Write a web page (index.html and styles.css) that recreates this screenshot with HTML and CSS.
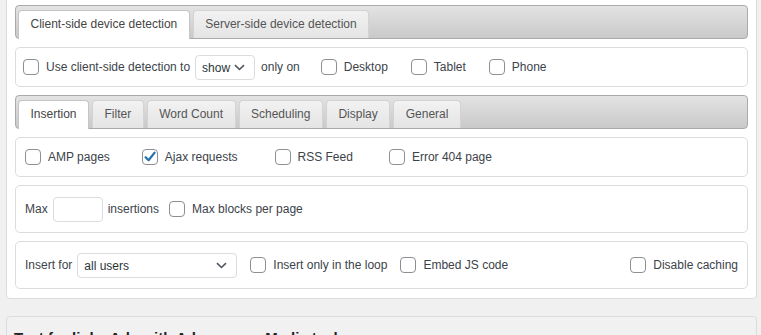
FILE: index.html
```html
<!DOCTYPE html>
<html>
<head>
<meta charset="utf-8">
<link rel="stylesheet" href="styles.css">
</head>
<body>
<div class="panel">
  <div class="tabbar">
    <div class="tab active">Client-side device detection</div>
    <div class="tab">Server-side device detection</div>
  </div>

  <div class="box box-device">
    <label class="opt"><span class="cb"></span>Use client-side detection to</label>
    <div class="select select-short"><span>show</span><svg class="chev" width="11" height="7" viewBox="0 0 11 7"><path d="M1 1.2 L5.5 5.5 L10 1.2" fill="none" stroke="#50575e" stroke-width="1.6"/></svg></div>
    <span class="txt">only on</span>
    <label class="opt device desktop"><span class="cb"></span>Desktop</label>
    <label class="opt device"><span class="cb"></span>Tablet</label>
    <label class="opt device"><span class="cb"></span>Phone</label>
  </div>

  <div class="tabbar">
    <div class="tab active">Insertion</div>
    <div class="tab">Filter</div>
    <div class="tab">Word Count</div>
    <div class="tab">Scheduling</div>
    <div class="tab">Display</div>
    <div class="tab">General</div>
  </div>

  <div class="box box-where">
    <label class="opt"><span class="cb"></span>AMP pages</label>
    <label class="opt ajax"><span class="cb checked"><svg width="16" height="16" viewBox="0 0 16 16"><path d="M3.6 8.2 L6.6 11.2 L12.6 3.6" fill="none" stroke="#2271b1" stroke-width="2.2" stroke-linecap="round" stroke-linejoin="round"/></svg></span>Ajax requests</label>
    <label class="opt rss"><span class="cb"></span>RSS Feed</label>
    <label class="opt err"><span class="cb"></span>Error 404 page</label>
  </div>

  <div class="box box-tall box-max">
    <span class="txt">Max</span>
    <span class="field"></span>
    <span class="txt insertions">insertions</span>
    <label class="opt"><span class="cb"></span>Max blocks per page</label>
  </div>

  <div class="box box-tall box-users">
    <span class="txt">Insert for</span>
    <div class="select select-long"><span>all users</span><svg class="chev" width="11" height="7" viewBox="0 0 11 7"><path d="M1 1.2 L5.5 5.5 L10 1.2" fill="none" stroke="#50575e" stroke-width="1.6"/></svg></div>
    <label class="opt loop"><span class="cb"></span>Insert only in the loop</label>
    <label class="opt"><span class="cb"></span>Embed JS code</label>
    <label class="opt cache"><span class="cb"></span>Disable caching</label>
  </div>
</div>

<div class="panel panel-next">
  <h2 class="next-title">Text for links Ads with Adsense on Media tech</h2>
</div>
</body>
</html>
```

FILE: styles.css
```css
html, body {
  margin: 0;
  padding: 0;
  background: #f0f0f1;
  font-family: "Liberation Sans", Arial, sans-serif;
  font-size: 12px;
  color: #3c434a;
}

.panel {
  margin: -4px 4px 0 6px;
  background: #fff;
  border: 1px solid #dcdcde;
  border-radius: 4px;
  padding: 8px 8px 9px 8px;
  display: flex;
  flex-direction: column;
  gap: 8px;
}

.tabbar {
  display: flex;
  align-items: flex-start;
  border: 1px solid #aaaaaa;
  border-radius: 4px;
  padding: 4px 2px 0 2px;
  background: linear-gradient(#e3e3e3, #c9c9c9);
}

.tab {
  border: 1px solid #d3d3d3;
  border-bottom: 0;
  border-radius: 4px 4px 0 0;
  padding: 6px 11.5px 7px 11.5px;
  line-height: 14px;
  margin-right: 3px;
  background: linear-gradient(#f2f2f2, #e4e4e4);
  color: #555;
  white-space: nowrap;
}

.tab.active {
  background: #fff;
  border-color: #c5c5c5;
  padding-bottom: 8px;
  margin-bottom: -1px;
  color: #454545;
}

.box {
  display: flex;
  align-items: center;
  min-height: 40px;
  box-sizing: border-box;
  border: 1px solid #dcdcde;
  border-radius: 5px;
  padding: 0 9px;
  white-space: nowrap;
}

.box-tall {
  min-height: 48px;
}

.opt {
  display: inline-flex;
  align-items: center;
  gap: 7px;
  line-height: 16px;
}

.cb {
  display: inline-block;
  width: 16px;
  height: 16px;
  box-sizing: border-box;
  border: 1px solid #8c8f94;
  border-radius: 4px;
  background: #fff;
  position: relative;
}

.cb svg {
  position: absolute;
  left: -1px;
  top: -1px;
}

.txt {
  line-height: 16px;
}

.select {
  display: flex;
  align-items: center;
  justify-content: space-between;
  height: 25px;
  box-sizing: border-box;
  border: 1px solid #dcdcde;
  border-radius: 4px;
  background: #fff;
  padding: 2px 9px 0 6px;
  color: #2c3338;
}

.chev {
  display: block;
  margin-top: -2px;
}

.box-device {
  padding-left: 7px;
}

.select-short {
  width: 60px;
  margin: 0 6px 0 5px;
}

.device {
  margin-left: 23px;
}

.device.desktop {
  margin-left: 21px;
}

.ajax {
  margin-left: 32px;
}

.rss {
  margin-left: 37px;
}

.err {
  margin-left: 36px;
}

.field {
  display: inline-block;
  width: 50px;
  height: 25px;
  box-sizing: border-box;
  border: 1px solid #dcdcde;
  border-radius: 4px;
  background: #fff;
  margin: 0 5px;
}

.insertions {
  margin-right: 10px;
}

.select-long {
  width: 160px;
  margin: 0 13px 0 5px;
}

.loop {
  margin-right: 13px;
}

.cache {
  margin-left: auto;
}

.box-users {
  padding-right: 9px;
}

.panel-next {
  margin-top: 17px;
  background: #f1f1f1;
  padding: 11px 7px 4px;
  display: block;
}

.next-title {
  margin: 0;
  font-size: 15px;
  line-height: 20px;
  font-weight: bold;
  color: #1d2327;
}
```
